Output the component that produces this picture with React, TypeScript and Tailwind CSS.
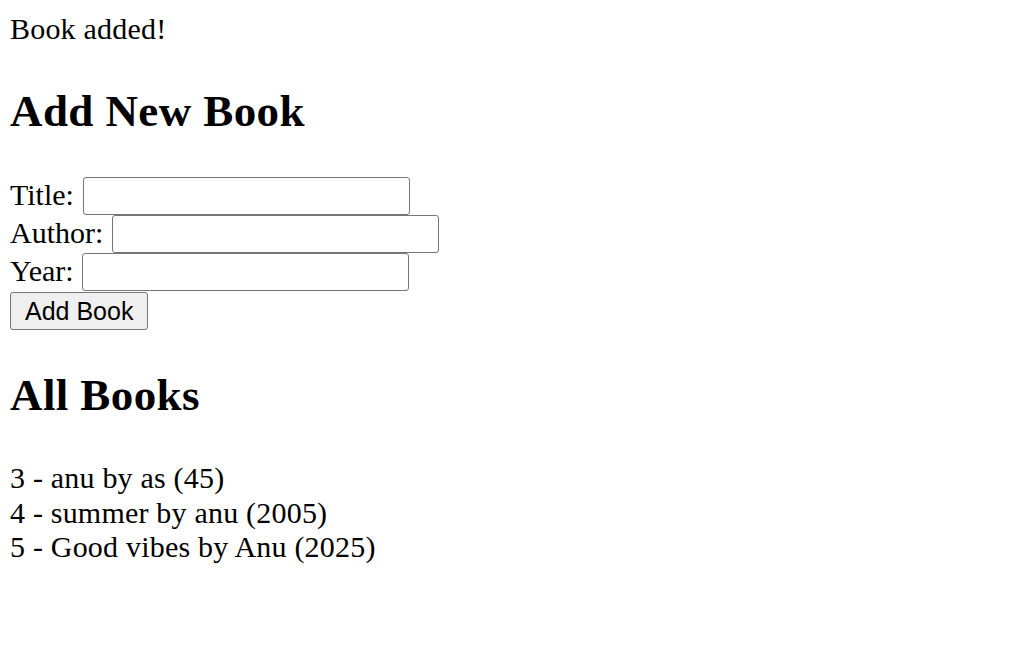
import { useState } from "react";

interface Book {
  id: number;
  title: string;
  author: string;
  year: number;
}

const books: Book[] = [
  { id: 3, title: "anu", author: "as", year: 45 },
  { id: 4, title: "summer", author: "anu", year: 2005 },
  { id: 5, title: "Good vibes", author: "Anu", year: 2025 },
];

const fields = ["Title", "Author", "Year"];

export default function App() {
  const [values, setValues] = useState<Record<string, string>>({ Title: "", Author: "", Year: "" });

  return (
    <div className="min-h-screen bg-white px-[10px] pt-[12px] font-['Liberation_Serif',serif] text-[30px] leading-[normal] text-black">
      <div className="tracking-[0.2px]">Book added!</div>

      <h2 className="mt-[39px] mb-[40px] text-[45px] font-bold leading-[normal] tracking-[0.4px]">Add New Book</h2>

      <form onSubmit={(e) => e.preventDefault()}>
        {fields.map((f) => (
          <div key={f}>
            <label className={f === "Title" ? "mr-[2px]" : "mr-px"}>{f}: </label>
            <input
              type="text"
              value={values[f]}
              onChange={(e) => setValues({ ...values, [f]: e.target.value })}
              className="h-[38px] w-[327px] rounded-[3px] border border-[#767676] bg-white px-[4px] align-baseline font-['Liberation_Sans',sans-serif] text-[25px] outline-none"
            />
          </div>
        ))}
        <div className="flex">
          <button
            type="submit"
            className="mt-px h-[38px] rounded-[3px] border border-[#767676] bg-[#efefef] px-[14px] font-['Liberation_Sans',sans-serif] text-[25px] leading-none text-black"
          >
            Add Book
          </button>
        </div>
      </form>

      <h2 className="mt-[39px] mb-[40px] text-[45px] font-bold leading-[normal] tracking-[0.4px]">All Books</h2>

      <div className="leading-[34.7px] tracking-[0.2px]">
        {books.map((b) => (
          <div key={b.id}>
            {b.id} - {b.title} by {b.author} ({b.year})
          </div>
        ))}
      </div>
    </div>
  );
}
